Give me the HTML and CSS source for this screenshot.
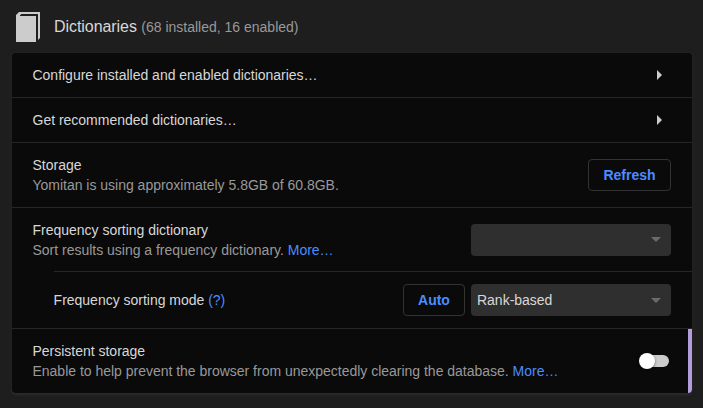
FILE: index.html
```html
<!DOCTYPE html>
<html lang="en">
<head>
<meta charset="utf-8">
<title>Dictionaries</title>
<link rel="stylesheet" href="styles.css">
</head>
<body>
<header class="heading">
  <svg class="book" width="24" height="30" viewBox="0 0 24 30"><path fill="#ccc" d="M3 0H24V26L22 28V2H5.500L4 3.200V4H20V30H0V3Z"/></svg>
  <h2>Dictionaries <span class="count">(68 installed, 16 enabled)</span></h2>
</header>
<main class="card">
  <section class="row link-row">
    <div class="label">Configure installed and enabled dictionaries…</div>
    <svg class="chevron" width="5" height="10" viewBox="0 0 5 10"><path d="M0 0L5 5L0 10Z"/></svg>
  </section>
  <section class="row link-row">
    <div class="label">Get recommended dictionaries…</div>
    <svg class="chevron" width="5" height="10" viewBox="0 0 5 10"><path d="M0 0L5 5L0 10Z"/></svg>
  </section>
  <section class="row">
    <div class="label">Storage<p>Yomitan is using approximately 5.8GB of 60.8GB.</p></div>
    <button class="refresh">Refresh</button>
  </section>
  <section class="row frequency">
    <div class="label">Frequency sorting dictionary<p>Sort results using a frequency dictionary. <a>More…</a></p></div>
    <div class="select"><span></span><svg width="10" height="5" viewBox="0 0 10 5"><path d="M0 0H10L5 5Z"/></svg></div>
  </section>
  <section class="row nested">
    <div class="label">Frequency sorting mode <a>(?)</a></div>
    <button class="auto">Auto</button>
    <div class="select"><span>Rank-based</span><svg width="10" height="5" viewBox="0 0 10 5"><path d="M0 0H10L5 5Z"/></svg></div>
  </section>
  <section class="row persistent">
    <div class="label">Persistent storage<p>Enable to help prevent the browser from unexpectedly clearing the database. <a>More…</a></p></div>
    <div class="toggle"><span class="knob"></span></div>
  </section>
</main>
</body>
</html>
```
FILE: styles.css
```css
* { box-sizing: border-box; }
body {
  margin: 0;
  height: 408px;
  overflow: hidden;
  background: #1e1e1e;
  color: #d8d8d8;
  font: 14px/20px "Liberation Sans", Arial, sans-serif;
  letter-spacing: -.012px;
}
.heading {
  display: flex;
  align-items: center;
  gap: 14px;
  height: 53px;
  padding: 0 16px;
}
.book { display: block; }
h2 { margin: 0; font-size: 16px; font-weight: 400; letter-spacing: -.06px; }
.count { color: #999; font-size: 14px; letter-spacing: 0; }
.card {
  width: 680px;
  margin-left: 12px;
  overflow: hidden;
  border-radius: 4px;
  background: #0a0a0a;
  box-shadow: 0 2px 2px rgba(75, 75, 75, .2), 0 1px 4px rgba(75, 75, 75, .25);
}
.row {
  display: flex;
  align-items: center;
  height: 65px;
  padding: 0 21px 0 20.5px;
  border-top: 1px solid #262626;
}
.label { flex: 1; white-space: nowrap; }
p { margin: 0; color: #999; }
a { color: #4b8dff; }
.link-row { height: 45px; padding-right: 30px; }
.link-row:first-child { height: 44px; border-top: 0; }
.chevron { fill: #ccc; }
.frequency { height: 64px; }
.nested { height: 57px; margin-left: 41.6px; padding-left: 0; }
button {
  height: 32px;
  padding: 0;
  border: 1px solid #333;
  border-radius: 4px;
  background: transparent;
  color: #4b8dff;
  font: bold 14px/20px "Liberation Sans", Arial, sans-serif;
}
.refresh { width: 83px; }
.auto { width: 62px; margin-right: 6px; }
.select {
  display: flex;
  align-items: center;
  justify-content: space-between;
  width: 200px;
  height: 32px;
  padding: 0 10px 0 6px;
  border-radius: 4px;
  background: #2f2f2f;
}
.select svg { fill: #6b6b6b; }
.persistent {
  padding-right: 23px;
  background: linear-gradient(#b39ddb, #b39ddb) right / 4px 100% no-repeat;
}
.toggle {
  display: flex;
  align-items: center;
  width: 28px;
  height: 12px;
  border-radius: 6px;
  background: #ccc;
}
.knob {
  width: 16px;
  height: 16px;
  margin-left: -2px;
  flex: none;
  border-radius: 50%;
  background: #fff;
  box-shadow: 0 1px 3px rgba(0, 0, 0, .5);
}
```
